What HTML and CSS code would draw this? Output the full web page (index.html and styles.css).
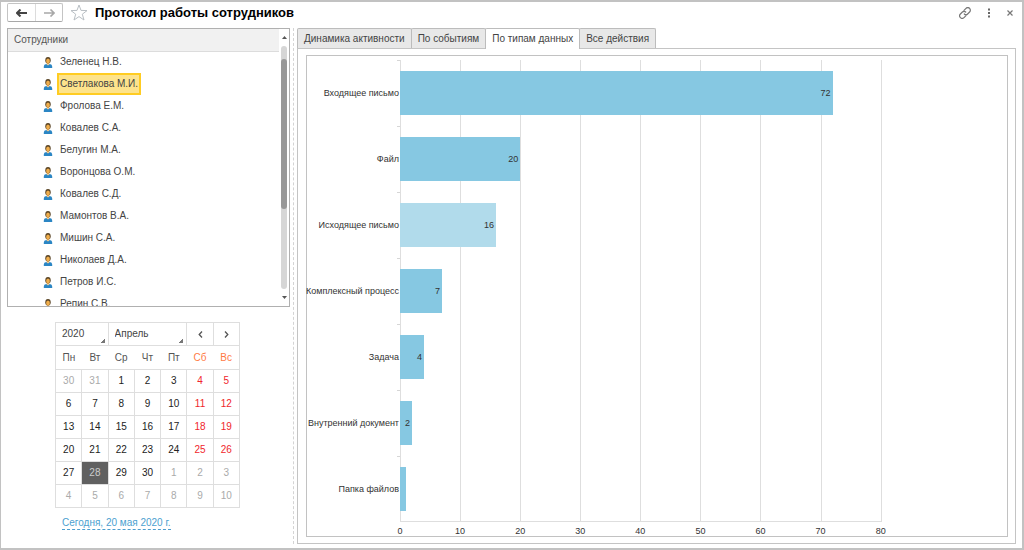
FILE: index.html
```html
<!DOCTYPE html>
<html lang="ru">
<head>
<meta charset="utf-8">
<title>Протокол работы сотрудников</title>
<link rel="stylesheet" href="styles.css">
</head>
<body>
<svg class="defs" aria-hidden="true">
  <symbol id="person" viewBox="0 0 10 11">
    <path d="M0.8 11 V9.4 Q0.8 7.2 3.2 6.9 L5 8 L6.8 6.9 Q9.2 7.2 9.2 9.4 V11 Z" fill="#2b86c4"/>
    <path d="M3.8 6 H6.2 V7.4 L5 8.6 L3.8 7.4 Z" fill="#f3c98b"/>
    <ellipse cx="5" cy="3.3" rx="2.7" ry="3.2" fill="#5b4526"/>
    <ellipse cx="5" cy="4" rx="1.9" ry="2.6" fill="#f0ad4b"/>
  </symbol>
</svg>
<div class="window">
  <header class="titlebar">
    <div class="history">
      <button type="button" aria-label="Назад"><svg width="12" height="8" viewBox="0 0 12 8"><path d="M4.5 0.5 L1 4 L4.5 7.5 M1.5 4 H11" fill="none" stroke="#444" stroke-width="2"/></svg></button>
      <button type="button" aria-label="Вперёд"><svg width="12" height="8" viewBox="0 0 12 8"><path d="M7.5 0.5 L11 4 L7.5 7.5 M10.5 4 H1" fill="none" stroke="#a8a8a8" stroke-width="1.6"/></svg></button>
    </div>
    <button type="button" class="icon-button" aria-label="В избранное"><svg width="18" height="17" viewBox="0 0 18 17"><path d="M9 1 L11 6.4 L17 6.6 L12.3 10.2 L14 16 L9 12.6 L4 16 L5.7 10.2 L1 6.6 L7 6.4 Z" fill="#fff" stroke="#b9bfc4" stroke-width="1"/></svg></button>
    <h1>Протокол работы сотрудников</h1>
    <div class="tools">
      <button type="button" class="icon-button" aria-label="Ссылка"><svg width="12" height="12" viewBox="0 0 12 12"><g fill="none" stroke="#777" stroke-width="1.2" stroke-linecap="round"><path d="M5 3.4 L7 1.4 A2.3 2.3 0 0 1 10.6 5 L8.6 7 A2.3 2.3 0 0 1 5.3 7"/><path d="M7 8.6 L5 10.6 A2.3 2.3 0 0 1 1.4 7 L3.4 5 A2.3 2.3 0 0 1 6.7 5"/></g></svg></button>
      <button type="button" class="icon-button" aria-label="Ещё"><svg width="4" height="10" viewBox="0 0 4 10"><path d="M1 0.5 H3 V2.5 H1 Z M1 4 H3 V6 H1 Z M1 7.5 H3 V9.5 H1 Z" fill="#666"/></svg></button>
      <button type="button" class="icon-button" aria-label="Закрыть"><svg width="6" height="6" viewBox="0 0 6 6"><path d="M0.5 0.5 L5.5 5.5 M5.5 0.5 L0.5 5.5" stroke="#777" stroke-width="1.2"/></svg></button>
    </div>
  </header>
  <main class="content">
    <aside class="sidebar">
      <section class="staff">
        <div class="staff-main">
          <h2>Сотрудники</h2>
          <ul>
            <li><svg class="person"><use href="#person"/></svg><span>Зеленец Н.В.</span></li>
            <li class="selected"><svg class="person"><use href="#person"/></svg><span>Светлакова М.И.</span></li>
            <li><svg class="person"><use href="#person"/></svg><span>Фролова Е.М.</span></li>
            <li><svg class="person"><use href="#person"/></svg><span>Ковалев С.А.</span></li>
            <li><svg class="person"><use href="#person"/></svg><span>Белугин М.А.</span></li>
            <li><svg class="person"><use href="#person"/></svg><span>Воронцова О.М.</span></li>
            <li><svg class="person"><use href="#person"/></svg><span>Ковалев С.Д.</span></li>
            <li><svg class="person"><use href="#person"/></svg><span>Мамонтов В.А.</span></li>
            <li><svg class="person"><use href="#person"/></svg><span>Мишин С.А.</span></li>
            <li><svg class="person"><use href="#person"/></svg><span>Николаев Д.А.</span></li>
            <li><svg class="person"><use href="#person"/></svg><span>Петров И.С.</span></li>
            <li><svg class="person"><use href="#person"/></svg><span>Репин С.В.</span></li>
          </ul>
        </div>
        <div class="scrollbar">
          <svg width="5" height="3" viewBox="0 0 5 3"><path d="M0 3 L2.5 0 L5 3 Z" fill="#555"/></svg>
          <div class="track"><div class="thumb"></div></div>
          <svg width="5" height="3" viewBox="0 0 5 3"><path d="M0 0 L2.5 3 L5 0 Z" fill="#555"/></svg>
        </div>
      </section>
      <section class="calendar">
        <table>
          <colgroup><col><col><col><col><col><col><col></colgroup>
          <thead>
            <tr class="period">
              <td colspan="2"><select aria-label="Год"><option>2020</option></select></td>
              <td colspan="3"><select aria-label="Месяц"><option>Апрель</option></select></td>
              <td><button type="button" aria-label="Предыдущий месяц"><svg width="5" height="7" viewBox="0 0 5 7"><path d="M4 0.5 L1.2 3.5 L4 6.5" fill="none" stroke="#555" stroke-width="1.3"/></svg></button></td>
              <td><button type="button" aria-label="Следующий месяц"><svg width="5" height="7" viewBox="0 0 5 7"><path d="M1 0.5 L3.8 3.5 L1 6.5" fill="none" stroke="#555" stroke-width="1.3"/></svg></button></td>
            </tr>
            <tr class="weekdays"><th>Пн</th><th>Вт</th><th>Ср</th><th>Чт</th><th>Пт</th><th class="weekend">Сб</th><th class="weekend">Вс</th></tr>
          </thead>
          <tbody>
            <tr><td class="other">30</td><td class="other">31</td><td>1</td><td>2</td><td>3</td><td class="holiday">4</td><td class="holiday">5</td></tr>
            <tr><td>6</td><td>7</td><td>8</td><td>9</td><td>10</td><td class="holiday">11</td><td class="holiday">12</td></tr>
            <tr><td>13</td><td>14</td><td>15</td><td>16</td><td>17</td><td class="holiday">18</td><td class="holiday">19</td></tr>
            <tr><td>20</td><td>21</td><td>22</td><td>23</td><td>24</td><td class="holiday">25</td><td class="holiday">26</td></tr>
            <tr><td>27</td><td class="current">28</td><td>29</td><td>30</td><td class="other">1</td><td class="other">2</td><td class="other">3</td></tr>
            <tr><td class="other">4</td><td class="other">5</td><td class="other">6</td><td class="other">7</td><td class="other">8</td><td class="other">9</td><td class="other">10</td></tr>
          </tbody>
        </table>
        <a href="#today" class="today">Сегодня, 20 мая 2020 г.</a>
      </section>
    </aside>
    <section class="report">
      <div class="tabs" role="tablist">
        <button type="button" role="tab">Динамика активности</button>
        <button type="button" role="tab">По событиям</button>
        <button type="button" role="tab" aria-selected="true" class="active">По типам данных</button>
        <button type="button" role="tab">Все действия</button>
      </div>
      <div class="pane">
        <div class="chart">
          <div class="labels">
            <span>Входящее письмо</span><span>Файл</span><span>Исходящее письмо</span><span>Комплексный процесс</span><span>Задача</span><span>Внутренний документ</span><span>Папка файлов</span>
          </div>
          <div class="ticks"><i></i><i></i><i></i><i></i><i></i><i></i><i></i></div>
          <div class="gridlines"><i></i><i></i><i></i><i></i><i></i><i></i><i></i><i></i></div>
          <div class="bars">
            <div><b style="width:90%">72</b></div>
            <div><b style="width:25%">20</b></div>
            <div><b class="light" style="width:20%">16</b></div>
            <div><b style="width:8.75%">7</b></div>
            <div><b style="width:5%">4</b></div>
            <div><b style="width:2.5%">2</b></div>
            <div><b style="width:1.25%"></b></div>
          </div>
          <div class="scale"><span>0</span><span>10</span><span>20</span><span>30</span><span>40</span><span>50</span><span>60</span><span>70</span><span>80</span></div>
        </div>
      </div>
    </section>
  </main>
</div>
</body>
</html>
```
FILE: styles.css
```css
* { box-sizing: border-box; }

body {
  margin: 0;
  background: #fff;
  color: #444;
  font: 10px/14px "Liberation Sans", Arial, sans-serif;
}

h1, h2, ul { margin: 0; padding: 0; }

button, select {
  margin: 0;
  padding: 0;
  border: 0;
  background: none;
  color: inherit;
  font: inherit;
}

svg { display: block; flex: none; }

.defs { display: none; }

.window {
  display: flex;
  flex-direction: column;
  height: 100vh;
  min-height: 500px;
  padding: 0 5px 4px;
  border: 2px solid #c2c2c2;
  border-left-width: 1px;
}

/* Title bar */
.titlebar {
  display: flex;
  align-items: center;
  gap: 7px;
  height: 21px;
  margin-bottom: 5px;
}

.history {
  display: flex;
  height: 19px;
  margin-left: 1px;
  border: 1px solid #c4c4c4;
  border-bottom-color: #a8a8a8;
  border-radius: 2px;
}

.history button {
  display: flex;
  align-items: center;
  justify-content: center;
  width: 27px;
}

.history button + button { border-left: 1px solid #dcdcdc; }

.icon-button { display: flex; }

h1 {
  color: #000;
  font-size: 13px;
  font-weight: bold;
  line-height: 20px;
}

.tools {
  display: flex;
  align-items: center;
  gap: 16px;
  margin-left: auto;
  padding-right: 4px;
}

.content {
  display: flex;
  flex: 1;
  min-height: 0;
}

/* Employees */
.sidebar {
  display: flex;
  flex-direction: column;
  width: 288px;
  padding-right: 3px;
  border-right: 1px dashed #d4d4d4;
}

.staff {
  display: flex;
  flex: 1;
  min-height: 0;
  margin-left: 1px;
  border: 1px solid #b0b0b0;
}

.staff-main {
  display: flex;
  flex: 1;
  flex-direction: column;
  min-height: 0;
}

h2 {
  padding: 4px 6px;
  border-bottom: 1px solid #dcdcdc;
  background: #f1f1f1;
  color: #555;
  font-size: 10px;
  font-weight: normal;
  line-height: 14px;
}

ul {
  flex: 1;
  min-height: 0;
  margin-top: -1px;
  overflow: hidden;
  list-style: none;
}

li {
  display: flex;
  align-items: center;
  gap: 4px;
  height: 22px;
  padding-left: 35px;
}

li span {
  padding: 2px 1px;
  border: 2px solid transparent;
}

.person { width: 10px; height: 11px; }

.selected span {
  border-color: #fc2;
  background: #fde38c;
}

.scrollbar {
  display: flex;
  flex-direction: column;
  align-items: center;
  gap: 7px;
  width: 10px;
  padding: 7px 0;
}

.track {
  flex: 1;
  width: 6px;
  padding-top: 13px;
  border-radius: 3px;
  background: #d6d6d6;
}

.thumb {
  height: 65%;
  border-radius: 3px;
  background: #989898;
}

/* Calendar */
.calendar {
  display: flex;
  flex-direction: column;
  width: 185px;
  margin: 15px auto 14px 49px;
}

table {
  width: 100%;
  border-collapse: collapse;
  table-layout: fixed;
}

tr { height: 23px; }

.weekdays { height: 24px; }

td, th {
  padding: 0;
  border: 1px solid #dedede;
  color: #222;
  font-weight: normal;
  line-height: 14px;
  text-align: center;
}

.weekdays th {
  border-right-style: none;
  border-left-style: none;
  color: #555;
}

.weekdays th:first-child { border-left-style: solid; }

.weekdays th:last-child { border-right-style: solid; }

.weekdays .weekend { color: #ff7a45; }

td.other { color: #aaa; }

td.holiday { color: #f0262c; }

td.current {
  background: #606060;
  color: #ccc;
}

.period select, .period button {
  display: block;
  width: 100%;
  height: 22px;
  color: #444;
}

.period select {
  padding-left: 6px;
  appearance: none;
  background: linear-gradient(135deg, transparent 50%, #777 50%) right 3px bottom 2px / 4px 4px no-repeat;
}

.period svg { margin: auto; }

.today {
  align-self: flex-start;
  margin: 8px 0 0 7px;
  border-bottom: 1px dashed #4c9fd0;
  color: #4c9fd0;
  line-height: 13px;
  text-decoration: none;
}

/* Report */
.report {
  display: flex;
  flex: 1;
  flex-direction: column;
  min-width: 0;
  margin: 0 1px 0 3px;
}

.tabs { display: flex; }

.tabs button {
  height: 20px;
  margin-right: -1px;
  padding: 0 6px;
  border: 1px solid #bcbcbc;
  border-bottom: 0;
  border-radius: 2px 2px 0 0;
  background: #e8e8e8;
}

.tabs .active {
  z-index: 1;
  height: 21px;
  margin-bottom: -1px;
  background: #fff;
}

.pane {
  display: flex;
  flex: 1;
  min-height: 0;
  padding: 6px 7px 6px 8px;
  border: 1px solid #c4c4c4;
}

.chart {
  display: grid;
  flex: 1;
  grid-template-columns: 90px 3px 1fr;
  grid-template-rows: 1fr 14px;
  padding: 4px 18% 0 0;
  border: 1px solid #c2c2c2;
  color: #333;
  font-size: 9px;
}

.labels, .ticks, .bars {
  display: grid;
  grid-template-rows: repeat(7, 1fr);
}

.labels {
  grid-area: 1 / 1 / 2 / 3;
  grid-template-columns: minmax(0, 1fr);
  align-items: center;
  padding-right: 1px;
  text-align: right;
  white-space: nowrap;
}

.labels span { justify-self: end; }

.ticks { grid-area: 1 / 2; }

.ticks i { border-top: 1px solid #d6d6d6; }

.gridlines {
  display: grid;
  grid-area: 1 / 3;
  grid-template-columns: repeat(8, 1fr);
  margin-right: -1px;
  border-right: 1px solid #dedede;
  border-bottom: 1px solid #dedede;
}

.gridlines i { border-left: 1px solid #dedede; }

.bars { grid-area: 1 / 3; }

.bars div { display: flex; align-items: center; }

.bars b {
  display: flex;
  align-items: center;
  justify-content: flex-end;
  height: 68%;
  padding-right: 2px;
  background: #86c8e2;
  font-weight: normal;
}

.bars b:empty { padding: 0; }

.bars .light { background: #b1dbeb; }

.scale {
  display: flex;
  grid-area: 2 / 3;
  justify-content: space-between;
  padding-top: 2px;
}

.scale span {
  display: flex;
  justify-content: center;
  width: 0;
}
```
